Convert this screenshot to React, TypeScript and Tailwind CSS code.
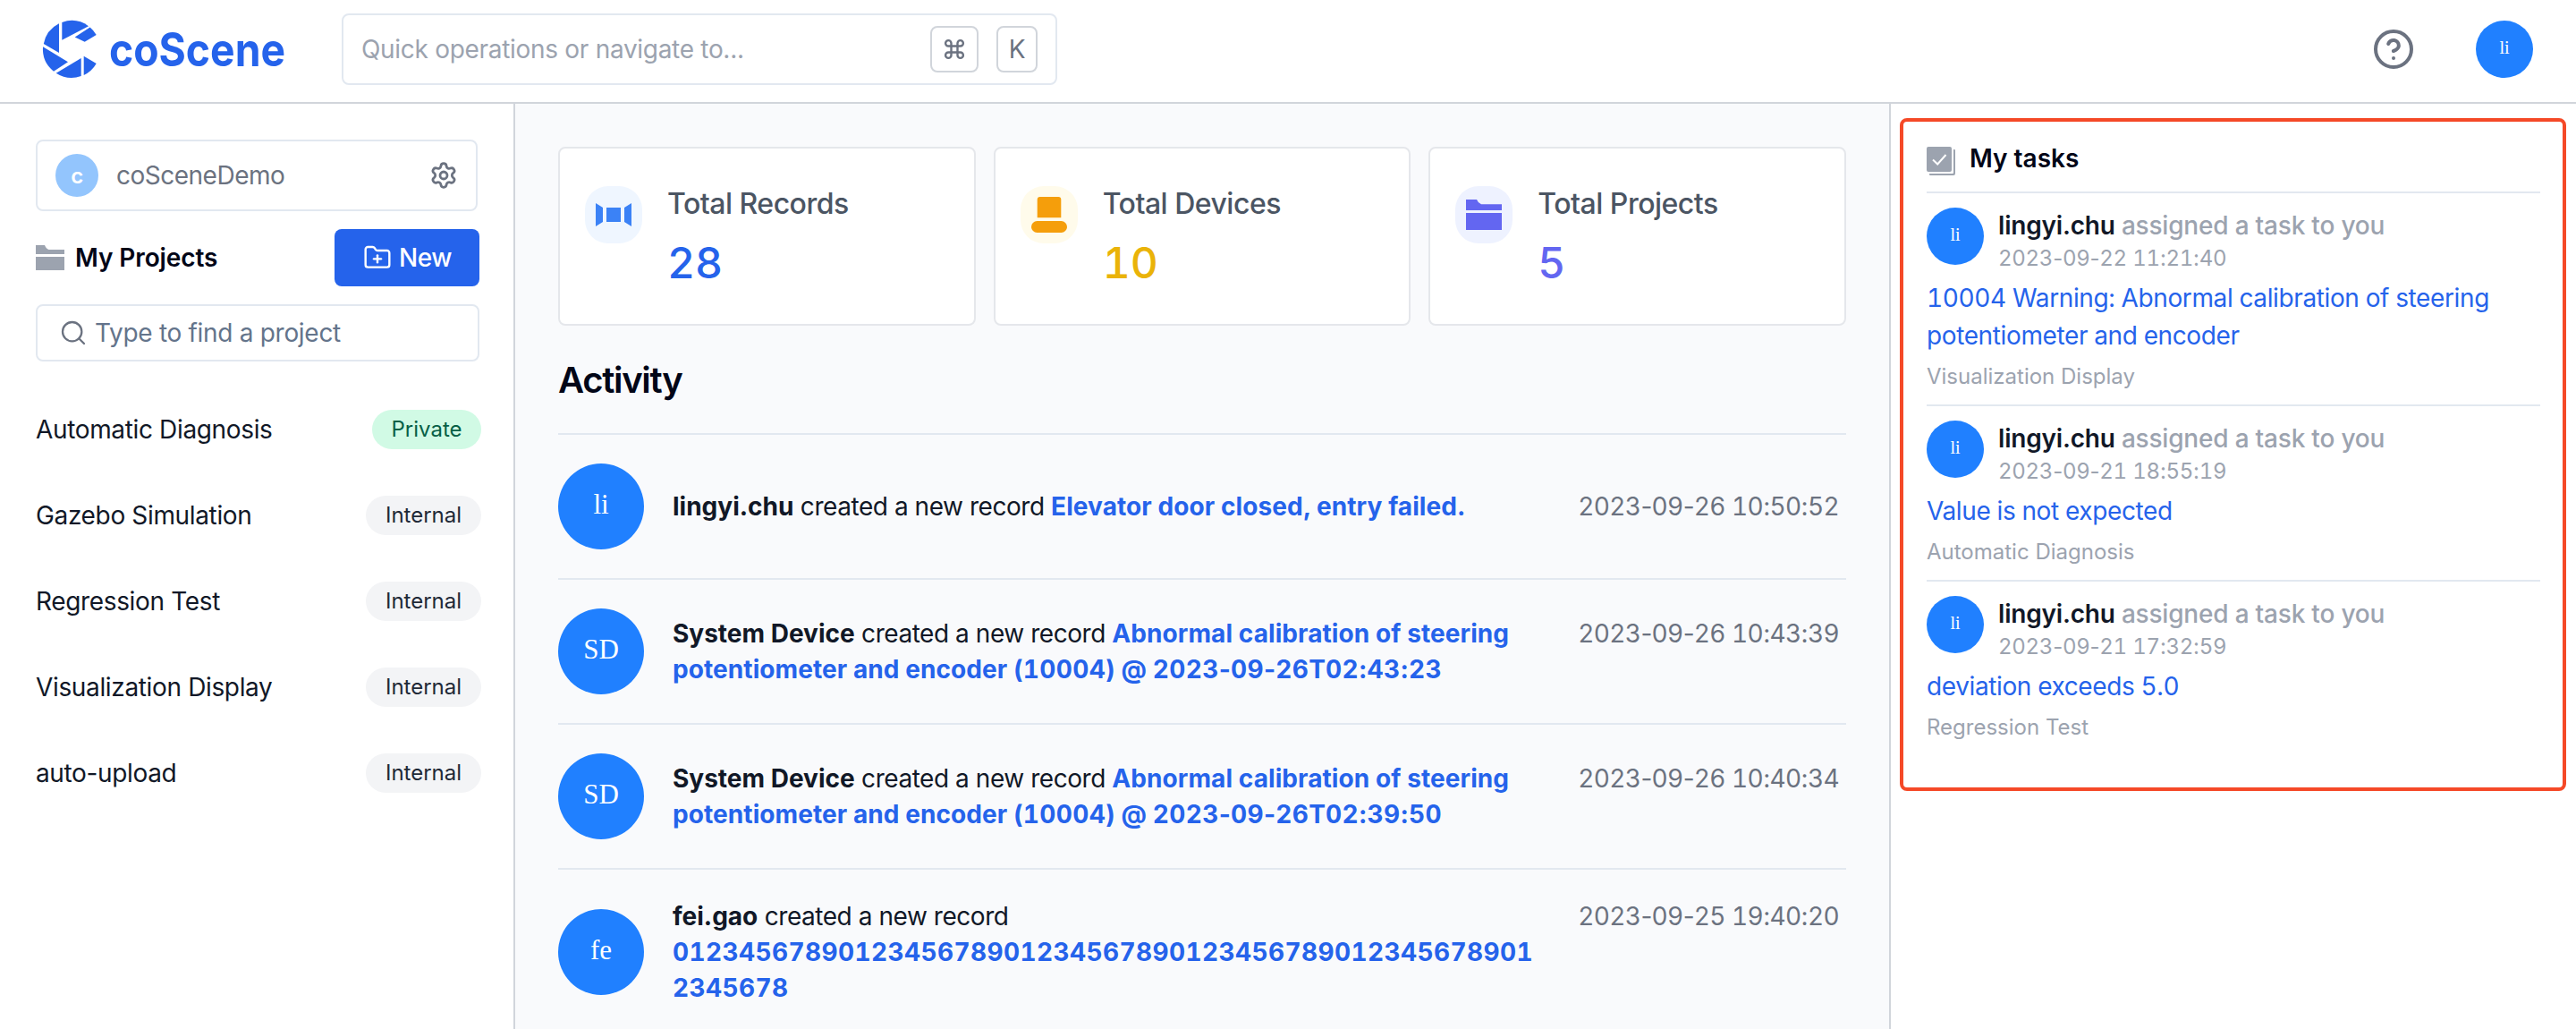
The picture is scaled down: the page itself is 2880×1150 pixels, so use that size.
import type { ReactNode } from "react";
import { CircleHelp, FolderPlus, Search, Settings } from "lucide-react";

const projects = [
  { name: "Automatic Diagnosis", access: "Private" },
  { name: "Gazebo Simulation", access: "Internal" },
  { name: "Regression Test", access: "Internal" },
  { name: "Visualization Display", access: "Internal" },
  { name: "auto-upload", access: "Internal" },
];

const activities = [
  { initials: "li", user: "lingyi.chu", record: "Elevator door closed, entry failed.", time: "2023-09-26 10:50:52" },
  {
    initials: "SD",
    user: "System Device",
    record: "Abnormal calibration of steering potentiometer and encoder (10004) @ 2023-09-26T02:43:23",
    time: "2023-09-26 10:43:39",
  },
  {
    initials: "SD",
    user: "System Device",
    record: "Abnormal calibration of steering potentiometer and encoder (10004) @ 2023-09-26T02:39:50",
    time: "2023-09-26 10:40:34",
  },
  {
    initials: "fe",
    user: "fei.gao",
    record: "01234567890123456789012345678901234567890123456789012345678",
    time: "2023-09-25 19:40:20",
  },
];

const tasks = [
  {
    time: "2023-09-22 11:21:40",
    title: "10004 Warning: Abnormal calibration of steering potentiometer and encoder",
    project: "Visualization Display",
  },
  { time: "2023-09-21 18:55:19", title: "Value is not expected", project: "Automatic Diagnosis" },
  { time: "2023-09-21 17:32:59", title: "deviation exceeds 5.0", project: "Regression Test" },
];

// Sets digits in fixed-width figures while punctuation keeps its natural width.
function Figures({ text, className = "" }: { text: string; className?: string }) {
  return (
    <>
      {text.split(/(\d+)/).map((part, i) =>
        i % 2 === 1 ? (
          <span key={i} className={`tabular-nums ${className}`}>
            {part}
          </span>
        ) : (
          part
        ),
      )}
    </>
  );
}

function Logo() {
  return (
    <svg className="h-20 w-[280px] shrink-0 overflow-visible" viewBox="0 0 280 80" fill="#2563eb">
      <g transform="translate(0 8)">
        <path d="M18 3.2V36L.8 26A32 32 0 0 1 18 3.2Z" />
        <path d="M21.3 1.9A32 32 0 0 1 51 6.2L21.3 21.7Z" />
        <path d="M52.6 7.6A32 32 0 0 1 59.7 16L46.7 23.7 35.7 18.4Z" />
        <path d="M0 29.3 28 46.3 12 56.7A32 32 0 0 1 0 29.3Z" />
        <path d="M14.7 58.7 42.7 42V62.1A32 32 0 0 1 14.7 58.7Z" />
        <path d="M45.7 39.7 59.7 48A32 32 0 0 1 45.7 61Z" />
      </g>
      <text
        x="74"
        y="59"
        textLength="197"
        lengthAdjust="spacingAndGlyphs"
        className="font-['Inter',sans-serif] text-[52px] font-bold tracking-normal"
      >
        coScene
      </text>
    </svg>
  );
}

function Avatar({ initials, large = false }: { initials: string; large?: boolean }) {
  return (
    <div
      className={
        large
          ? "flex size-24 shrink-0 items-center justify-center rounded-full bg-[#2080ff] pb-1 font-['Liberation_Serif',serif] text-[31px] tracking-normal text-white"
          : "flex size-16 shrink-0 items-center justify-center rounded-full bg-[#2080ff] pb-1 font-['Liberation_Serif',serif] text-xl tracking-normal text-white"
      }
    >
      {initials}
    </div>
  );
}

function Header() {
  return (
    <header className="flex h-[116px] shrink-0 items-center border-b-2 border-[#d1d5db] pr-12 pb-1 pl-12">
      <Logo />
      <div className="ml-[54px] flex h-20 w-[800px] items-center rounded-lg border-2 border-[#e2e8f0] px-5">
        <span className="flex-1 tracking-[-0.3px] text-[#9ca3af]">Quick operations or navigate to...</span>
        <kbd className="mr-5 flex h-[52px] w-[54px] items-center justify-center rounded-lg border-2 border-[#d1d5db] font-['Inter',sans-serif] text-[#6b7280]">
          <svg className="size-6" viewBox="0 0 24 24" fill="none" stroke="currentColor" strokeWidth="2.4">
            <path d="M8.5 8.5h7v7h-7zM8.5 8.5H5.3A3.2 3.2 0 1 1 8.5 5.3zM15.5 8.5h3.2a3.2 3.2 0 1 0-3.2-3.2zM8.5 15.5H5.3a3.2 3.2 0 1 0 3.2 3.2zM15.5 15.5h3.2a3.2 3.2 0 1 1-3.2 3.2z" />
          </svg>
        </kbd>
        <kbd className="flex h-[52px] w-[46px] items-center justify-center rounded-lg border-2 border-[#d1d5db] font-['Inter',sans-serif] text-[#6b7280]">
          K
        </kbd>
      </div>
      <CircleHelp className="ml-auto size-12 text-[#6b7280]" strokeWidth={2} />
      <div className="ml-[68px]">
        <Avatar initials="li" />
      </div>
    </header>
  );
}

function Sidebar() {
  return (
    <aside className="w-[576px] shrink-0 border-r-2 border-[#d1d5db] pt-10 pl-10">
      <div className="flex h-20 w-[494px] items-center rounded-lg border-2 border-[#e2e8f0] px-5">
        <div className="flex size-12 items-center justify-center rounded-full bg-[#93c5fd] pt-px text-2xl font-semibold text-white">
          c
        </div>
        <span className="ml-5 flex-1 tracking-[-0.5px] text-[#6b7280]">coSceneDemo</span>
        <Settings className="size-8 text-[#6b7280]" strokeWidth={2.1} />
      </div>

      <div className="mt-5 flex h-16 w-[496px] items-center">
        <svg className="h-7 w-8" viewBox="0 0 32 28" fill="#9ca3af">
          <path d="M0 0h10q1.500 4 4.500 5H32v5H0zM0 13h32v15H0z" />
        </svg>
        <span className="ml-3 flex-1 font-semibold tracking-[-0.1px] text-[#020617]">My Projects</span>
        <button className="flex h-16 w-[162px] items-center rounded-lg bg-[#2563eb] pl-8 font-medium tracking-[-0.5px] text-white">
          <FolderPlus className="mr-2 size-8" strokeWidth={1.8} />
          New
        </button>
      </div>

      <div className="mt-5 flex h-16 w-[496px] items-center rounded-lg border-2 border-[#e2e8f0] pl-6">
        <Search className="mr-2 size-8 text-[#6b7280]" strokeWidth={1.7} />
        <span className="tracking-[-0.3px] text-[#64748b]">Type to find a project</span>
      </div>

      <ul className="mt-[54px] flex w-[498px] flex-col gap-[52px]">
        {projects.map((p) => (
          <li key={p.name} className="flex h-11 items-center justify-between text-[#111827]">
            <span>{p.name}</span>
            <span
              className={
                p.access === "Private"
                  ? "flex h-11 w-[122px] items-center justify-center rounded-full bg-[#d1fae5] text-2xl tracking-normal text-[#065f46]"
                  : "flex h-11 w-[129px] items-center justify-center rounded-full bg-[#f3f4f6] text-2xl tracking-normal text-[#1f2937]"
              }
            >
              {p.access}
            </span>
          </li>
        ))}
      </ul>
    </aside>
  );
}

function StatCard({
  label,
  value,
  valueClass,
  bubbleClass,
  children,
}: {
  label: string;
  value: number;
  valueClass: string;
  bubbleClass: string;
  children: ReactNode;
}) {
  return (
    <div className="flex h-[200px] items-start rounded-lg border-2 border-[#e5e7eb] bg-white px-7 pt-[42px]">
      <div className={`flex size-16 items-center justify-center rounded-[26px] ${bubbleClass}`}>{children}</div>
      <div className="ml-7">
        <div className="text-[32px] leading-10 font-medium tracking-[-0.5px] text-[#4b5563]">{label}</div>
        <div className={`mt-[18px] text-[48px] leading-[56px] font-medium tracking-normal tabular-nums ${valueClass}`}>
          {value}
        </div>
      </div>
    </div>
  );
}

function Main() {
  return (
    <main className="w-[1536px] shrink-0 overflow-hidden bg-[#f9fafc] px-12 pt-12">
      <div className="grid grid-cols-3 gap-5">
        <StatCard label="Total Records" value={28} valueClass="text-[#2563eb]" bubbleClass="bg-[#eff6ff]">
          <svg className="h-[26px] w-10" viewBox="0 0 40 26" fill="#3b82f6">
            <path d="M0 0l8 5v16l-8 5zM40 0l-8 5v16l8 5zM12 5h16v16H12z" />
          </svg>
        </StatCard>
        <StatCard label="Total Devices" value={10} valueClass="text-[#eab308]" bubbleClass="bg-[#fffbeb]">
          <svg className="h-10 w-10" viewBox="0 0 40 40" fill="#f59e0b">
            <path d="M6.700 23.200V3a3 3 0 0 1 3-3h20.600a3 3 0 0 1 3 3v20.200z" />
            <rect y="27" width="40" height="13" rx="6.5" />
          </svg>
        </StatCard>
        <StatCard label="Total Projects" value={5} valueClass="text-[#6366f1]" bubbleClass="bg-[#eef2ff]">
          <svg className="h-[34px] w-10" viewBox="0 0 40 34" fill="#6366f1">
            <path d="M0 0h12q1.500 4 5 5.300H40V12H0zM0 15h40v19H0z" />
          </svg>
        </StatCard>
      </div>

      <h2 className="mt-[33px] mb-[31px] text-[40px] leading-[56px] font-semibold tracking-[-1.3px] text-[#020617]">
        Activity
      </h2>

      {activities.map((a) => (
        <div key={a.time} className="flex items-center border-t-2 border-[#e2e8f0] py-8">
          <Avatar initials={a.initials} large />
          <div className="ml-8 flex flex-1 items-start justify-between pr-2 leading-10">
            <p className="w-[972px] tracking-[-0.45px] break-words text-[#111827]">
              <span className="font-bold tracking-normal">{a.user}</span> created a new record{" "}
              <span className="font-bold tracking-[0.08px] text-[#2563eb]">
                <Figures text={a.record} className="tracking-[0.4px]" />
              </span>
            </p>
            <time className="tracking-[-0.65px] whitespace-nowrap text-[#6b7280]">
              <Figures text={a.time} />
            </time>
          </div>
        </div>
      ))}
    </main>
  );
}

function Tasks() {
  return (
    <aside className="flex-1 border-l-2 border-[#d1d5db] pt-4 pr-[11px] pl-2.5">
      <section className="h-[752px] rounded-lg border-4 border-[#f54927] pt-7 pr-[25px] pl-[26px]">
        <div className="flex h-[50px] items-start">
          <svg className="size-8" viewBox="0 0 32 32" fill="#9ca3af">
            <rect width="28" height="28" rx="2" />
            <path d="M30 3h1a1 1 0 0 1 1 1v26a2 2 0 0 1-2 2H4a1 1 0 0 1-1-1v-1h26a1 1 0 0 0 1-1z" />
            <path d="M7 14.500l5.200 5L21.500 9" fill="none" stroke="#fff" strokeWidth="2" />
          </svg>
          <h3 className="ml-4 leading-[26px] font-semibold tracking-normal text-[#020617]">My tasks</h3>
        </div>
        {tasks.map((t) => (
          <article key={t.time} className="border-t-2 border-[#e2e8f0] py-4">
            <div className="flex h-16 items-start">
              <Avatar initials="li" />
              <div className="ml-4">
                <div className="leading-10 font-medium tracking-[-0.2px] text-[#9ca3af]">
                  <span className="font-semibold text-[#111827]">lingyi.chu</span> assigned a task to you
                </div>
                <div className="pt-px text-2xl leading-8 tracking-[-0.28px] text-[#9ca3af]">
                  <Figures text={t.time} />
                </div>
              </div>
            </div>
            <p className="mt-4 leading-[42px] tracking-[-0.38px] tabular-nums text-[#2563eb]">{t.title}</p>
            <p className="mt-2 translate-y-px text-2xl leading-8 tracking-normal text-[#9ca3af]">{t.project}</p>
          </article>
        ))}
      </section>
    </aside>
  );
}

export default function App() {
  return (
    <div className="flex h-[1150px] w-[2880px] flex-col overflow-hidden bg-white font-['Inter',sans-serif] text-[28px] tracking-[-0.35px]">
      <Header />
      <div className="flex min-h-0 flex-1">
        <Sidebar />
        <Main />
        <Tasks />
      </div>
    </div>
  );
}
